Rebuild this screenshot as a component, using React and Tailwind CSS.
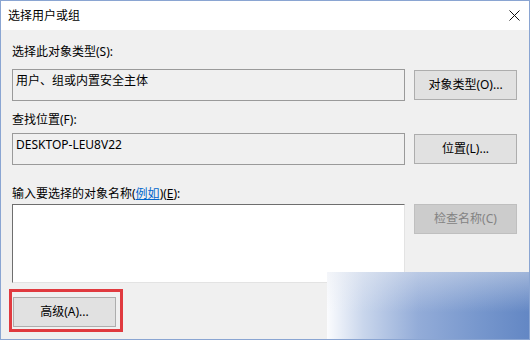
import React from 'react';

const font = { fontFamily: '"Noto Sans", "Noto Sans CJK SC", sans-serif' };

function Button({ children, disabled, className = '' }) {
    return (
        <div
            className={`flex items-center justify-center w-[103px] h-[30px] border text-[12px] leading-[16px] ${
                disabled
                    ? 'bg-[#cccccc] border-[#bfbfbf] text-[#838383]'
                    : 'bg-[#e1e1e1] border-[#adadad] text-black'
            } ${className}`}
        >
            {children}
        </div>
    );
}

function ReadonlyBox({ children }) {
    return (
        <div className="w-[393px] h-[32px] border border-[#9a9a9a] bg-[#f0f0f0] pl-[3px] pt-[3px] text-[12px] leading-[16px] text-black">
            {children}
        </div>
    );
}

export default function App() {
    return (
        <div
            className="relative w-[530px] h-[340px] border border-[#8aa5d2] bg-[#f0f0f0] flex flex-col overflow-hidden"
            style={font}
        >
            {/* Title bar */}
            <div className="h-[29px] bg-white flex items-center justify-between pl-[7px] pr-[9px]">
                <span className="text-[12px] leading-[16px] text-black">选择用户或组</span>
                <svg width="11" height="11" viewBox="0 0 11 11">
                    <path d="M0.5 0.5L10.5 10.5M10.5 0.5L0.5 10.5" stroke="#111" strokeWidth="1" />
                </svg>
            </div>

            {/* Client area */}
            <div className="flex flex-col pl-[11px] pr-[12px] text-[12px] leading-[16px] text-black">
                <div className="mt-[14px]">选择此对象类型(S):</div>
                <div className="mt-[9px] flex items-center gap-[9px]">
                    <ReadonlyBox>用户、组或内置安全主体</ReadonlyBox>
                    <Button>对象类型(O)...</Button>
                </div>

                <div className="mt-[11px]">查找位置(F):</div>
                <div className="mt-[5px] flex items-center gap-[9px]">
                    <ReadonlyBox>DESKTOP-LEU8V22</ReadonlyBox>
                    <Button>位置(L)...</Button>
                </div>

                <div className="mt-[21px]">
                    输入要选择的对象名称(<span className="text-[#0066cc] underline">例如</span>)(<span className="underline">E</span>):
                </div>
                <div className="mt-[2px] flex items-start gap-[9px]">
                    <div className="w-[393px] h-[79px] bg-white border-t border-l border-t-[#6e6e6e] border-l-[#6e6e6e] border-b border-r border-b-[#e3e3e3] border-r-[#e3e3e3]"></div>
                    <Button disabled className="h-[29px]">检查名称(C)</Button>
                </div>

                {/* Advanced button with red highlight */}
                <div className="mt-[6px] -ml-[3px] w-[114px] h-[43px] border-[3px] border-[#e03a3f] pt-[5px] pl-[1px]">
                    <Button className="h-[29px]">高级(A)...</Button>
                </div>
            </div>

            {/* Watermark overlay */}
            <div className="absolute right-0 bottom-0 w-[202px] h-[67px] bg-[linear-gradient(to_bottom,rgba(235,238,244,0.45),rgba(235,238,244,0)_60%),linear-gradient(to_right,#fbfcfe_0%,#c9d6ec_18%,#93acd8_45%,#7797cd_75%,#6387c4_100%)]"></div>
        </div>
    );
}
